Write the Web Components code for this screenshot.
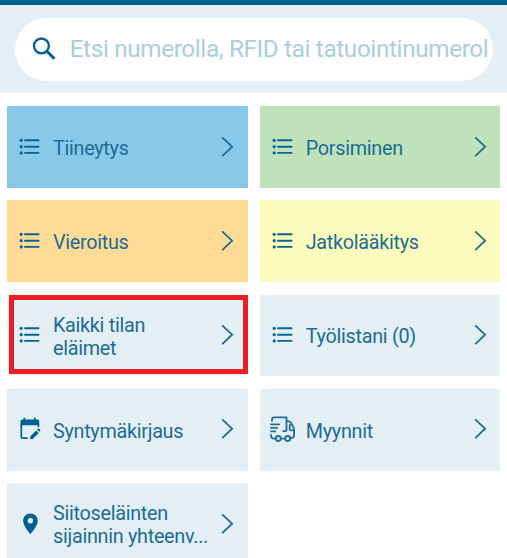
<!DOCTYPE html>
<html lang="fi">
<head>
<meta charset="utf-8">
<title>Eläimet</title>
<style>
  body {
    margin: 0;
    background: #fff;
    font-family: Roboto, "Liberation Sans", sans-serif;
    color: #1c6c96;
    overflow: hidden;
  }
</style>
</head>
<body>
<farm-app></farm-app>

<script>
const icons = {
  list: `
    <path d="M8 7.3h13.6M8 13.7h13.6M8 19.9h13.6" fill="none" stroke="#086494" stroke-width="1.9" stroke-linecap="round"/>
    <g fill="#086494"><circle cx="4.2" cy="7.3" r="1.6"/><circle cx="4.2" cy="13.7" r="1.6"/><circle cx="4.2" cy="19.9" r="1.6"/></g>`,
  calendar: `
    <g transform="translate(0 .5)">
      <path d="M3.5 5.6q0-1.6 1.6-1.6h1.4V2.2h1.8V4h8.6V2.2h1.8V4h2q1.5 0 1.5 1.6v4.2H3.5z" fill="#00608f"/>
      <path d="M4.3 9v12.2q0 1.4 1.4 1.4h5M21.4 9v2.4" fill="none" stroke="#00608f" stroke-width="1.7"/>
      <path d="M13.2 23.4v-2.5l6-6 2.5 2.5-6 6zM20 14.1l1-1q.5-.4 1 0l1.2 1.2q.4.5 0 1l-1 1z" fill="#00608f"/>
    </g>`,
  truck: `
    <g transform="translate(0 .9)" fill="none" stroke="#1c7099" stroke-width="1.8" stroke-linecap="round" stroke-linejoin="round">
      <path d="M2 5V3.8Q2 1.5 4.3 1.5h12.2v12q0 1.8-1.8 1.8h-1.4"/>
      <path d="M16.6 5.2h1.8q1.6 0 2.4 1.4l2.6 4.6q.6 1 .6 2.1v6.4q0 2.4-2.4 2.4h-1"/>
      <path d="M21.2 8.8h-.5q-1 0-1 1v3.6q0 1.1 1.1 1.1h3"/>
      <path d="M1 8.5h8.2M1 12h6.2M1 15.5h4.3M1 19v.5Q1 22.7 4.2 22.7h1.5M11.1 22.7h3.8"/>
      <circle cx="8.3" cy="22.6" r="2.5"/><circle cx="17.7" cy="22.6" r="2.5"/>
    </g>`,
  pin: `
    <path d="M13.4 3.4c-4.2 0-7.3 3.2-7.3 7.3 0 5.2 7.3 13.4 7.3 13.4s7.4-8.2 7.4-13.4c0-4.1-3.2-7.3-7.4-7.3zm0 10.1a2.7 2.7 0 1 1 0-5.4 2.7 2.7 0 0 1 0 5.4z" fill="#00608f"/>`
};

class SearchBar extends HTMLElement {
  constructor() {
    super();
    this.attachShadow({ mode: "open" });
    this.render();
  }
  render() {
    this.shadowRoot.innerHTML = `
      <div class="search">
        <svg width="26" height="26" viewBox="0 0 26 26" fill="none" stroke="#00608f">
          <circle cx="10.4" cy="9.9" r="7.4" stroke-width="2.3"/>
          <path d="M15.4 15.2l1.6 1" stroke-width="2.4"/>
          <path d="M16.4 15.8l7 6.9" stroke-width="3"/>
        </svg>
        <span class="search__text"><slot></slot></span>
      </div>
      ${this.getStyles()}
    `;
  }
  getStyles() {
    return `
      <style>
        :host {
          display: block;
          box-sizing: border-box;
          height: 93px;
          padding: 12.5px 14.5px 0 14.7px;
          border-top: 5px solid #00608f;
          background: #e3eff4;
        }
        .search {
          display: flex;
          align-items: center;
          box-sizing: border-box;
          height: 63.3px;
          padding: 0 3px 0 16px;
          border-radius: 32px;
          background: #fff;
          overflow: hidden;
        }
        svg { flex: none; }
        .search__text {
          margin-left: 13px;
          font-size: 24.2px;
          line-height: 30px;
          letter-spacing: -0.31px;
          white-space: nowrap;
          color: #a9cee0;
        }
      </style>
    `;
  }
}

class MenuTile extends HTMLElement {
  constructor() {
    super();
    this.attachShadow({ mode: "open" });
  }
  connectedCallback() {
    this.render();
  }
  render() {
    this.shadowRoot.innerHTML = `
      <svg class="icon" width="28" height="28" viewBox="0 0 28 28">${icons[this.getAttribute("icon")]}</svg>
      <span class="label"><slot></slot></span>
      <svg class="chevron" width="14" height="22" viewBox="0 0 14 22">
        <path d="M1.2 1.3L11.1 10.7 1.2 20.1" fill="none" stroke="#1c6c96" stroke-width="1.8"/>
      </svg>
      ${this.getStyles()}
    `;
  }
  getStyles() {
    return `
      <style>
        :host {
          display: flex;
          align-items: center;
          box-sizing: border-box;
          padding: 0 12.4px 0 10px;
          background: var(--tile-color, #e3eff4);
        }
        :host([highlighted]) {
          margin: 0 0 2.4px 1.7px;
          padding: 2.4px 7.4px 0 3.3px;
          border: 5px solid #ee1c25;
          box-shadow: -1px 1px 2px #dce8ed;
        }
        .icon, .chevron {
          flex: none;
          margin-bottom: 0.6px;
        }
        .label {
          flex: 1;
          margin-left: 7.7px;
          padding-top: 2.6px;
          font-size: 19.8px;
          line-height: 23px;
          letter-spacing: -0.28px;
          white-space: nowrap;
        }
      </style>
    `;
  }
}

class FarmApp extends HTMLElement {
  constructor() {
    super();
    this.attachShadow({ mode: "open" });
    this.render();
  }
  render() {
    this.shadowRoot.innerHTML = `
      <search-bar>Etsi numerolla, RFID tai tatuointinumerol</search-bar>
      <main>
        <menu-tile icon="list" class="blue">Tiineytys</menu-tile>
        <menu-tile icon="list" class="green">Porsiminen</menu-tile>
        <menu-tile icon="list" class="orange">Vieroitus</menu-tile>
        <menu-tile icon="list" class="yellow">Jatkolääkitys</menu-tile>
        <menu-tile icon="list" highlighted>Kaikki tilan<br>eläimet</menu-tile>
        <menu-tile icon="list">Työlistani (0)</menu-tile>
        <menu-tile icon="calendar">Syntymäkirjaus</menu-tile>
        <menu-tile icon="truck">Myynnit</menu-tile>
        <menu-tile icon="pin">Siitoseläinten<br>sijainnin yhteenv...</menu-tile>
      </main>
      ${this.getStyles()}
    `;
  }
  getStyles() {
    return `
      <style>
        :host {
          display: block;
          height: 558px;
          overflow: hidden;
        }
        main {
          display: grid;
          grid-template-columns: 1fr 1fr;
          grid-auto-rows: 81.8px;
          gap: 12.5px;
          padding: 13px 6.7px 0 7.3px;
        }
        .blue { --tile-color: #88c8e9; }
        .green { --tile-color: #bfe2bb; }
        .orange { --tile-color: #ffdb96; }
        .yellow { --tile-color: #fefcbd; }
      </style>
    `;
  }
}

customElements.define("search-bar", SearchBar);
customElements.define("menu-tile", MenuTile);
customElements.define("farm-app", FarmApp);
</script>
</body>
</html>
